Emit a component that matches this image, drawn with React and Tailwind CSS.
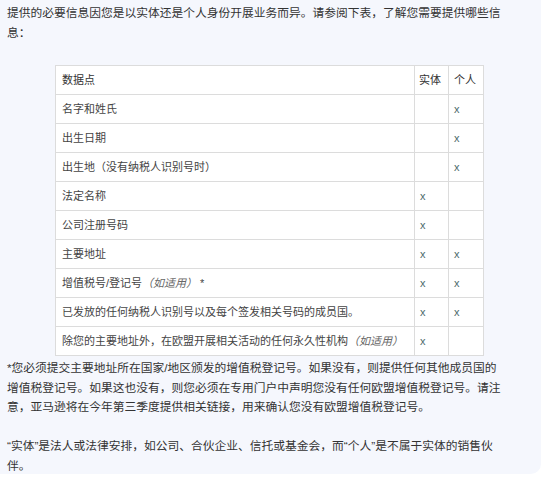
import React from "react";

const rows = [
  { label: "名字和姓氏", e: false, p: true },
  { label: "出生日期", e: false, p: true },
  { label: "出生地（没有纳税人识别号时）", e: false, p: true },
  { label: "法定名称", e: true, p: false },
  { label: "公司注册号码", e: true, p: false },
  { label: "主要地址", e: true, p: true },
  { label: "增值税号/登记号", note: "（如适用）", star: true, e: true, p: true },
  { label: "已发放的任何纳税人识别号以及每个签发相关号码的成员国。", e: true, p: true },
  { label: "除您的主要地址外，在欧盟开展相关活动的任何永久性机构", note: "（如适用）", e: true, p: false },
];

export default function App() {
  return (
    <div className="w-[554px] h-[477px] bg-white overflow-hidden">
      <div
        className="w-[541px] h-[474px] bg-[#f5f7fd] rounded-br-[10px] pl-[7px] pr-[33px] pt-[3px] text-[#333] text-[11.75px] leading-[20px]"
        style={{ fontFamily: '"Liberation Sans", "Noto Sans CJK SC", sans-serif' }}
      >
        <p>
          提供的必要信息因您是以实体还是个人身份开展业务而异。请参阅下表，了解您需要提供哪些信息：
        </p>
        <table className="ml-[48px] mt-[22px] w-[429px] border-collapse bg-white text-[11px] leading-[16px] text-[#444]">
          <thead>
            <tr className="h-[29px]">
              <th className="border border-[#dcdcdc] px-[6px] text-left font-normal text-[#333]">数据点</th>
              <th className="w-[34px] border border-[#dcdcdc] px-[4px] text-left font-normal text-[#333]">实体</th>
              <th className="w-[35px] border border-[#dcdcdc] px-[5px] text-left font-normal text-[#333]">个人</th>
            </tr>
          </thead>
          <tbody>
            {rows.map((r, i) => (
              <tr key={i} className="h-[29px]">
                <td className="border border-[#dcdcdc] px-[6px]">
                  {r.label}
                  {r.note && <span className="italic text-[#666]">{r.note}</span>}
                  {r.star && <span> *</span>}
                </td>
                <td className="border border-[#dcdcdc] px-[5px] text-[#4d6b6b]">{r.e ? "x" : ""}</td>
                <td className="border border-[#dcdcdc] px-[5px] text-[#4d6b6b]">{r.p ? "x" : ""}</td>
              </tr>
            ))}
          </tbody>
        </table>
        <p className="mt-[2px] leading-[19.5px]">
          *您必须提交主要地址所在国家/地区颁发的增值税登记号。如果没有，则提供任何其他成员国的增值税登记号。如果这也没有，则您必须在专用门户中声明您没有任何欧盟增值税登记号。请注意，亚马逊将在今年第三季度提供相关链接，用来确认您没有欧盟增值税登记号。
        </p>
        <p className="mt-[19.5px] leading-[19.5px]">
          “实体”是法人或法律安排，如公司、合伙企业、信托或基金会，而“个人”是不属于实体的销售伙伴。
        </p>
      </div>
    </div>
  );
}
